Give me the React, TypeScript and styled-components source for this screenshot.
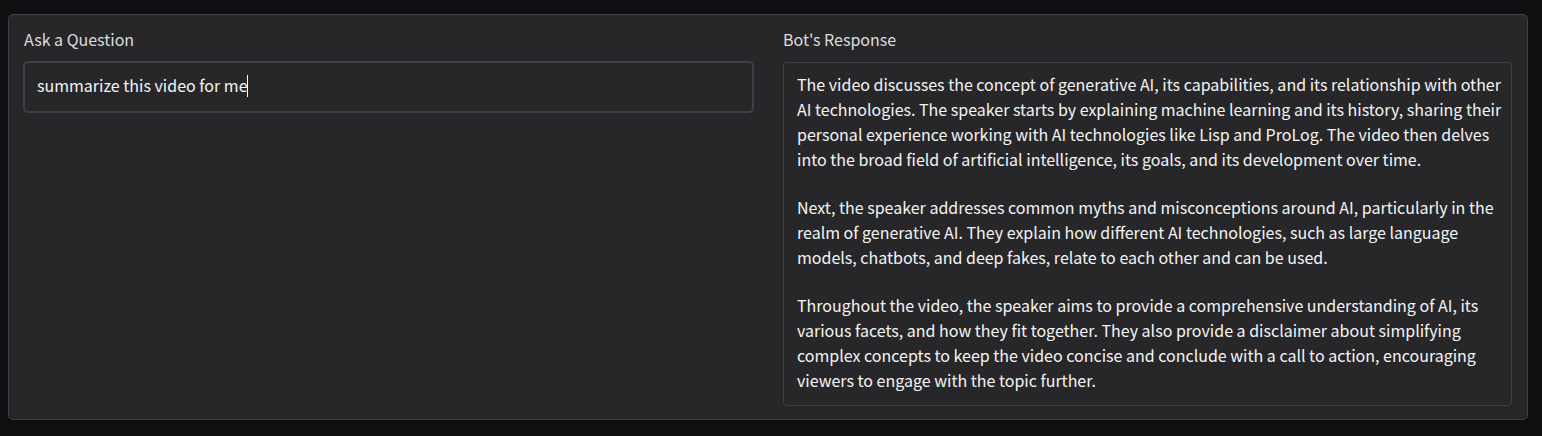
import React, { useState } from "react";
import styled, { createGlobalStyle } from "styled-components";

const GlobalStyle = createGlobalStyle`
  *, *::before, *::after { box-sizing: border-box; }
  body {
    margin: 0;
    background: #0f0f11;
    color: #f4f4f5;
    font-family: "Source Sans Pro", "Noto Sans CJK SC", "Noto Sans", sans-serif;
    font-size: 16px;
    line-height: 25px;
  }
`;

const Page = styled.main`
  padding: 14px 14px 16px 8px;
`;

const Panel = styled.section`
  display: grid;
  grid-template-columns: repeat(2, minmax(0, 1fr));
  align-items: start;
  gap: 30px;
  padding: 12px 15px 13px;
  background: #27272a;
  border: 1px solid #3f3f46;
  border-radius: 5px;
`;

const Field = styled.div`
  display: flex;
  flex-direction: column;
  gap: 10px;
`;

const Label = styled.label`
  color: #dcdcdf;
`;

const InputFrame = styled.div`
  position: relative;
  display: flex;
`;

const TextInput = styled.input`
  width: 100%;
  height: 50px;
  padding: 0 12px 4px;
  color: inherit;
  font: inherit;
  background: #27272a;
  border: 1px solid #3f3f46;
  border-radius: 4px;
  outline: none;
  box-shadow: 0 0 0 1px #3f3f46;
  caret-color: transparent;
`;

/* Invisible copy of the value; its right edge carries a steady caret. */
const CaretTrack = styled.span`
  position: absolute;
  top: 13px;
  left: 12px;
  height: 22px;
  color: transparent;
  white-space: pre;
  pointer-events: none;
  border-right: 1px solid #ffffff;
`;

const Response = styled.output`
  display: flex;
  flex-direction: column;
  gap: 23px;
  padding: 9px 8px 12px 13px;
  border: 1px solid #3f3f46;
  border-radius: 4px;
`;

const Paragraph = styled.span`
  display: block;
`;

const paragraphs = [
  "The video discusses the concept of generative AI, its capabilities, and its relationship with other AI technologies. The speaker starts by explaining machine learning and its history, sharing their personal experience working with AI technologies like Lisp and ProLog. The video then delves into the broad field of artificial intelligence, its goals, and its development over time.",
  "Next, the speaker addresses common myths and misconceptions around AI, particularly in the realm of generative AI. They explain how different AI technologies, such as large language models, chatbots, and deep fakes, relate to each other and can be used.",
  "Throughout the video, the speaker aims to provide a comprehensive understanding of AI, its various facets, and how they fit together. They also provide a disclaimer about simplifying complex concepts to keep the video concise and conclude with a call to action, encouraging viewers to engage with the topic further.",
];

export default function App() {
  const [question, setQuestion] = useState("summarize this video for me");

  return (
    <>
      <GlobalStyle />
      <Page>
        <Panel>
          <Field>
            <Label htmlFor="question">Ask a Question</Label>
            <InputFrame>
              <TextInput
                id="question"
                type="text"
                autoComplete="off"
                value={question}
                onChange={(event) => setQuestion(event.target.value)}
              />
              <CaretTrack aria-hidden="true">{question}</CaretTrack>
            </InputFrame>
          </Field>
          <Field>
            <Label htmlFor="response">Bot's Response</Label>
            <Response id="response">
              {paragraphs.map((text) => (
                <Paragraph key={text}>{text}</Paragraph>
              ))}
            </Response>
          </Field>
        </Panel>
      </Page>
    </>
  );
}
